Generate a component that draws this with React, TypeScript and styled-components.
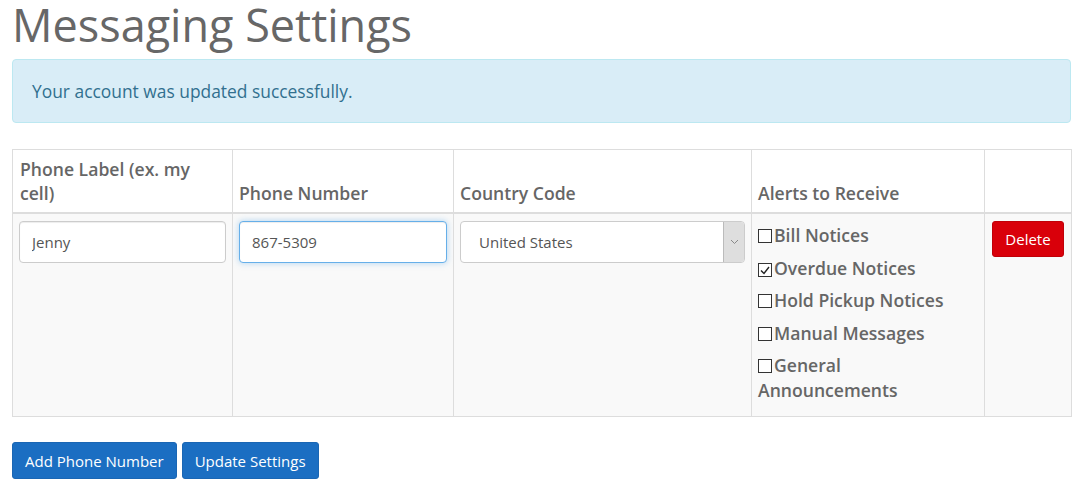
import React from "react";
import styled, { createGlobalStyle } from "styled-components";

const Global = createGlobalStyle`
  html, body { margin: 0; padding: 0; background: #fff; }
  body { font-family: "Open Sans", "DejaVu Sans", sans-serif; color: #666; }
  * { box-sizing: border-box; }
`;

const Page = styled.div`
  padding: 0 6px 0 12px;
`;

const Title = styled.h1`
  margin: 0;
  font-size: 45px;
  font-weight: 400;
  line-height: 52px;
  color: #676767;
  margin-top: -1px;
`;

const Alert = styled.div`
  margin-top: 8px;
  background: #d9edf7;
  border: 1px solid #bce8f1;
  border-radius: 4px;
  color: #31708f;
  font-size: 17.4px;
  padding: 19px 19px;
  line-height: 24px;
`;

const Table = styled.table`
  margin-top: 26px;
  width: 1059px;
  table-layout: fixed;
  border-collapse: collapse;
  border: 1px solid #ddd;
`;

const Th = styled.th<{ $w: number }>`
  width: ${(p) => p.$w}px;
  text-align: left;
  vertical-align: bottom;
  padding: 7px 7px 7px 6px;
  font-size: 17.6px;
  font-weight: 600;
  line-height: 24px;
  color: #666;
  border: 1px solid #ddd;
  border-bottom: 2px solid #ddd;

  &:first-child {
    padding-left: 7px;
  }
`;

const Td = styled.td`
  vertical-align: top;
  padding: 7px 6px 13px;
  background: #f9f9f9;
  border: 1px solid #ddd;

  &:first-child {
    padding-left: 6px;
  }
`;

const TextInput = styled.input<{ $focus?: boolean }>`
  display: block;
  width: 100%;
  height: 42px;
  padding: 6px 12px;
  font-family: "Open Sans", sans-serif;
  font-size: 15px;
  color: #555;
  background: #fff;
  border: 1px solid ${(p) => (p.$focus ? "#66afe9" : "#ccc")};
  border-radius: 4px;
  outline: none;
  box-shadow: ${(p) =>
    p.$focus
      ? "inset 0 1px 1px rgba(0,0,0,.075), 0 0 6px rgba(102,175,233,.5)"
      : "inset 0 1px 1px rgba(0,0,0,.075)"};
`;

const SelectBox = styled.div`
  display: flex;
  height: 42px;
  background: #fff;
  border: 1px solid #ccc;
  border-radius: 4px;
  overflow: hidden;
  font-size: 15px;
  color: #555;
`;

const SelectText = styled.div`
  flex: 1;
  display: flex;
  align-items: center;
  padding-left: 18px;
`;

const SelectArrow = styled.div`
  width: 21px;
  background: #dedede;
  border-left: 1px solid #bbb;
  display: flex;
  align-items: center;
  justify-content: center;
`;

const AlertList = styled.div`
  display: flex;
  flex-direction: column;
  gap: 7.5px;
  padding-top: 2px;
`;

const Check = styled.label`
  display: block;
  font-size: 17.6px;
  font-weight: 600;
  line-height: 25px;
  color: #666;
`;

const Box = styled.span`
  display: inline-flex;
  align-items: center;
  justify-content: center;
  width: 14px;
  height: 14px;
  border: 1px solid #333;
  background: #fff;
  margin-right: 2px;
  vertical-align: -1px;
`;

const DeleteButton = styled.button`
  display: block;
  margin-left: auto;
  margin-right: 1px;
  width: 72px;
  height: 36px;
  padding: 0;
  background: #d9000a;
  border: 1px solid #c00008;
  border-radius: 3px;
  color: #fff;
  font-family: "Open Sans", sans-serif;
  font-size: 15px;
`;

const Actions = styled.div`
  display: flex;
  gap: 5px;
  margin-top: 25px;
`;

const Button = styled.button`
  height: 37px;
  padding: 0 12px;
  background: #1b6ec2;
  border: 1px solid #1a66b4;
  border-radius: 3px;
  color: #fff;
  font-family: "Open Sans", sans-serif;
  font-size: 15px;
`;

const alerts = [
  { label: "Bill Notices", checked: false },
  { label: "Overdue Notices", checked: true },
  { label: "Hold Pickup Notices", checked: false },
  { label: "Manual Messages", checked: false },
  { label: "General Announcements", checked: false },
];

export default function App() {
  return (
    <Page>
      <Global />
      <Title>Messaging Settings</Title>
      <Alert>Your account was updated successfully.</Alert>
      <Table>
        <thead>
          <tr>
            <Th $w={220}>Phone Label (ex. my cell)</Th>
            <Th $w={221}>Phone Number</Th>
            <Th $w={298}>Country Code</Th>
            <Th $w={233}>Alerts to Receive</Th>
            <Th $w={87}></Th>
          </tr>
        </thead>
        <tbody>
          <tr>
            <Td>
              <TextInput defaultValue="Jenny" />
            </Td>
            <Td>
              <TextInput $focus defaultValue="867-5309" />
            </Td>
            <Td>
              <SelectBox>
                <SelectText>United States</SelectText>
                <SelectArrow>
                  <svg width="9" height="6" viewBox="0 0 9 6">
                    <path d="M1 1l3.5 3.5L8 1" fill="none" stroke="#888" strokeWidth="1" />
                  </svg>
                </SelectArrow>
              </SelectBox>
            </Td>
            <Td>
              <AlertList>
                {alerts.map((a) => (
                  <Check key={a.label}>
                    <Box>
                      {a.checked && (
                        <svg width="12" height="12" viewBox="0 0 12 12">
                          <path d="M2 6.5l3 3 5-6.5" fill="none" stroke="#222" strokeWidth="1.4" />
                        </svg>
                      )}
                    </Box>
                    {a.label}
                  </Check>
                ))}
              </AlertList>
            </Td>
            <Td>
              <DeleteButton>Delete</DeleteButton>
            </Td>
          </tr>
        </tbody>
      </Table>
      <Actions>
        <Button>Add Phone Number</Button>
        <Button>Update Settings</Button>
      </Actions>
    </Page>
  );
}
